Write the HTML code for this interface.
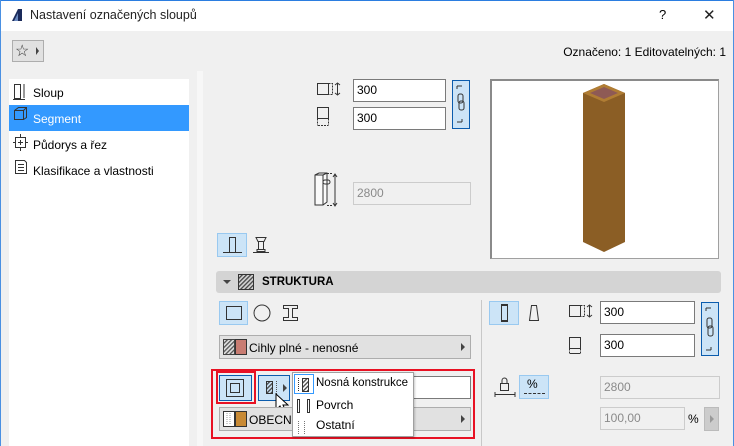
<!DOCTYPE html>
<html><head><meta charset="utf-8"><style>
*{margin:0;padding:0;box-sizing:border-box}
body{width:734px;height:446px;overflow:hidden;background:#f0f0f0;font-family:"Liberation Sans",sans-serif;font-size:12px;color:#000;position:relative}
.a{position:absolute}
.fld{position:absolute;background:#fff;border:1px solid #7a7a7a;padding:3px 0 0 3px;font-size:12px}
.dis{position:absolute;background:#f0f0f0;border:1px solid #ccc;color:#8a8a8a;padding:3px 0 0 3px;font-size:12px}
.sel{position:absolute;background:#cce4f7;border:1px solid #99c9f0}
.dd{position:absolute;background:#e1e1e1;border:1px solid #adadad}
.tri{position:absolute;width:0;height:0;border-top:4px solid transparent;border-bottom:4px solid transparent;border-left:4px solid #444}
.li{position:absolute;left:9px;width:180px;height:26px;padding:7px 0 0 24px;font-size:12px}
</style></head><body>
<div class="a" style="left:0;top:0;width:734px;height:31px;background:#fff;border:1px solid #2b7de0;border-bottom:none"></div>
<div class="a" style="left:0;top:0;width:1px;height:446px;background:#4a90e2"></div>
<div class="a" style="left:733px;top:0;width:1px;height:446px;background:#4a90e2"></div>
<svg class="a" style="left:10px;top:8px" width="14" height="14"><path d="M2 13 L8 1 L12 1 L12 13 Z" fill="#1a2a5a"/><path d="M4 13 L8 5 L8 13Z" fill="#6a8ac0"/></svg>
<div class="a" style="left:30px;top:8px;font-size:12.5px;color:#222">Nastavení označených sloupů</div>
<div class="a" style="left:659px;top:7px;font-size:13px">?</div>
<div class="a" style="left:703px;top:6px;font-size:15px;font-weight:normal;color:#222">✕</div>

<div class="a" style="left:12px;top:40px;width:32px;height:22px;background:#e1e1e1;border:1px solid #adadad"></div>
<div class="a" style="left:15px;top:41px;font-size:16px;color:#333">☆</div>
<div class="tri" style="left:36px;top:47px;border-left-width:3px"></div>
<div class="a" style="right:8px;top:45px;font-size:12px">Označeno: 1 Editovatelných: 1</div>

<div class="a" style="left:9px;top:79px;width:180px;height:367px;background:#fff"></div>
<div class="a" style="left:197px;top:71px;width:6px;height:375px;background:#f7f7f7"></div>
<div class="li" style="top:79px">Sloup</div>
<div class="li" style="top:105px;background:#3399ff;color:#fff">Segment</div>
<div class="li" style="top:131px">Půdorys a řez</div>
<div class="li" style="top:157px">Klasifikace a vlastnosti</div>
<svg class="a" style="left:12px;top:82px" width="18" height="100" fill="none" stroke="#333" stroke-width="1">
<rect x="2.5" y="2.5" width="6" height="14"/><path d="M1 17.5h12M12 2v14"/>
<path d="M2.5 28.5l4-3h8v10l-3 2H2.5zM2.5 28.5h9v9M11.5 28.5l3-3"/>
<rect x="3.5" y="55.5" width="10" height="10"/><path d="M8.5 58v5M6 60.5h5M8.5 52v3M8.5 66v3M1 60.5h2M14 60.5h2"/>
<path d="M3.5 78.5h9l2 2v11h-11z M6 82.5h6M6 85.5h6M6 88.5h6"/></svg>

<svg class="a" style="left:316px;top:82px" width="30" height="50" fill="none" stroke="#333" stroke-width="1"><rect x="1.5" y="1.5" width="11" height="11"/><path d="M12.5 1.5h4v11h-4" stroke-dasharray="2 1"/><path d="M21.5 1v12M19 3l2.5-2 2.5 2M19 11l2.5 2 2.5-2"/><rect x="1.5" y="25.5" width="11" height="11"/><path d="M1.5 36.5v7M12.5 36.5v7M2 43.5h10" stroke-dasharray="2 1"/></svg>
<div class="fld" style="left:353px;top:79px;width:93px;height:23px">300</div>
<div class="fld" style="left:353px;top:107px;width:93px;height:23px">300</div>
<div class="a" style="left:452px;top:80px;width:18px;height:49px;background:#cce4f7;border:1px solid #0b5cad"></div>
<svg class="a" style="left:454px;top:84px" width="14" height="40" fill="none" stroke="#333"><path d="M3 2h5M3 2v3M3 38h5M8 38v-3"/><rect x="4" y="10" width="5" height="9" rx="2"/><rect x="5" y="17" width="5" height="9" rx="2"/></svg>
<svg class="a" style="left:313px;top:172px" width="34" height="36" fill="none" stroke="#333"><path d="M2 3l4-2h8v29l-4 3H2z" fill="#fafafa"/><path d="M2 3h8v30M10 3l4-2"/><path d="M14 1.5h5M14 33.5h5" stroke-dasharray="2 1"/><path d="M22 2v32M20 5l2-3 2 3M20 31l2 3 2-3"/><rect x="10" y="8" width="7" height="4" rx="2"/></svg>
<div class="dis" style="left:353px;top:182px;width:118px;height:23px">2800</div>

<div class="a" style="left:490px;top:79px;width:229px;height:180px;background:#fff;border:1px solid #a0a0a0;border-top:2px solid #8a8a8a;border-left:2px solid #8a8a8a"></div>
<svg class="a" style="left:583px;top:84px" width="44" height="170"><path d="M0 9 L21 0 L42 9 L42 158 L21 168 L0 158Z" fill="#8b5e25"/><path d="M0 9 L21 0 L42 9 L21 18Z" fill="#b07d34"/><path d="M7 9 L21 3 L35 9 L21 15Z" fill="#8e5a55"/></svg>

<div class="sel" style="left:217px;top:233px;width:30px;height:24px"></div>
<svg class="a" style="left:220px;top:235px" width="60" height="20" fill="none" stroke="#333"><path d="M9.5 18V2.5h6V18M3 17.5h19"/><path d="M36 2.5h10l-2 4h-6zM38.5 6.5v8M43.5 6.5v8M37 14.5h8v2h-8zM33 17.5h16"/></svg>

<div class="a" style="left:216px;top:271px;width:505px;height:22px;background:#d4d4d4;border-radius:3px"></div>
<div class="a" style="left:223px;top:280px;width:0;height:0;border-left:4px solid transparent;border-right:4px solid transparent;border-top:4px solid #444"></div>
<svg class="a" style="left:238px;top:274px" width="16" height="16"><defs><pattern id="h" width="3" height="3" patternUnits="userSpaceOnUse" patternTransform="rotate(45)"><rect width="1.3" height="3" fill="#444"/></pattern></defs><rect x="0.5" y="0.5" width="15" height="15" fill="url(#h)" stroke="#333"/></svg>
<div class="a" style="left:262px;top:276px;font-weight:bold;font-size:11.5px">STRUKTURA</div>

<div class="a" style="left:481px;top:300px;width:1px;height:146px;background:#c8c8c8"></div>
<div class="sel" style="left:219px;top:301px;width:29px;height:24px"></div>
<svg class="a" style="left:222px;top:303px" width="82" height="20" fill="none" stroke="#333"><rect x="4.5" y="3.5" width="15" height="13"/><circle cx="40" cy="10" r="8"/><path d="M61.5 2.5h14v3h-5v9h5v3h-14v-3h5v-9h-5z"/></svg>
<div class="dd" style="left:219px;top:335px;width:252px;height:24px"></div>
<svg class="a" style="left:223px;top:339px" width="26" height="16"><rect x="0.5" y="0.5" width="11" height="15" fill="url(#h)" stroke="#333" opacity=".9"/><rect x="12.5" y="0.5" width="11" height="15" fill="#c87c72" stroke="#333"/></svg>
<div class="a" style="left:249px;top:341px">Cihly plné - nenosné</div>
<div class="tri" style="left:461px;top:343px"></div>

<div class="a" style="left:211px;top:369px;width:264px;height:70px;border:2px solid #e81123"></div>
<div class="a" style="left:216px;top:371px;width:40px;height:33px;border:2px solid #e81123"></div>
<div class="a" style="left:219px;top:375px;width:33px;height:26px;background:#cce4f7;border:1px solid #0b5cad"></div>
<svg class="a" style="left:226px;top:379px" width="18" height="18" fill="none" stroke="#333"><rect x="0.5" y="0.5" width="17" height="17"/><rect x="4.5" y="4.5" width="9" height="9" fill="#cce4f7"/></svg>
<div class="a" style="left:258px;top:375px;width:32px;height:26px;background:#cce4f7;border:1px solid #0b5cad"></div>
<svg class="a" style="left:262px;top:380px" width="26" height="16"><rect x="4.5" y="1.5" width="6" height="12" fill="url(#h)" stroke="#333"/><path d="M14.5 1v13" stroke="#555" stroke-dasharray="1 1"/></svg>
<div class="tri" style="left:283px;top:384px"></div>
<svg class="a" style="left:275px;top:393px" width="16" height="22"><path d="M1 1v16l4-4 3 7 3-1-3-7h5z" fill="#fff" stroke="#000"/></svg>
<div class="a" style="left:412px;top:376px;width:59px;height:23px;background:#fff;border:1px solid #7a7a7a"></div>
<div class="dd" style="left:219px;top:407px;width:252px;height:24px"></div>
<svg class="a" style="left:223px;top:411px" width="26" height="16"><rect x="0.5" y="0.5" width="11" height="15" fill="#fff" stroke="#333"/><path d="M4 2v12M7 2v12" stroke="#999" stroke-dasharray="1 1"/><rect x="12.5" y="0.5" width="11" height="15" fill="#c88a35" stroke="#333"/></svg>
<div class="a" style="left:249px;top:413px">OBECNÉ</div>
<div class="tri" style="left:461px;top:415px"></div>

<div class="a" style="left:292px;top:372px;width:122px;height:65px;background:#fff;border:1px solid #a0a0a0;box-shadow:1px 1px 2px rgba(0,0,0,.2)"></div>
<div class="a" style="left:294px;top:374px;width:20px;height:20px;border:1px solid #3399ff"></div>
<svg class="a" style="left:296px;top:376px" width="18" height="58" fill="none" stroke="#333"><path d="M2.5 2v14" stroke-dasharray="1 1"/><rect x="6.5" y="2.5" width="6" height="13" fill="url(#h)"/><path d="M1.5 23.5h2v13h-2zM11.5 23.5h2v13h-2z"/><path d="M2.5 45v13M8.5 45v13" stroke="#777" stroke-dasharray="1 1"/></svg>
<div class="a" style="left:316px;top:377px;font-size:11.5px">Nosná konstrukce</div>
<div class="a" style="left:316px;top:398px">Povrch</div>
<div class="a" style="left:316px;top:418px">Ostatní</div>

<div class="sel" style="left:489px;top:301px;width:30px;height:24px"></div>
<svg class="a" style="left:492px;top:303px" width="60" height="20" fill="none" stroke="#333"><path d="M9.5 2.5h6v15h-6zM9 1.5h7M9 18.5h7"/><path d="M39.5 2.5h5l2 15h-9z"/></svg>
<svg class="a" style="left:568px;top:303px" width="30" height="52" fill="none" stroke="#333"><rect x="1.5" y="2.5" width="11" height="11"/><path d="M12.5 2.5h4v11h-4" stroke-dasharray="2 1"/><path d="M21.5 2v12M19 4l2.5-2 2.5 2M19 12l2.5 2 2.5-2"/><rect x="1.5" y="34.5" width="11" height="11"/><path d="M1.5 45.5v6M12.5 45.5v6" stroke-dasharray="2 1"/><path d="M2 50.5h10"/></svg>
<div class="fld" style="left:600px;top:301px;width:95px;height:23px">300</div>
<div class="fld" style="left:600px;top:334px;width:95px;height:23px">300</div>
<div class="a" style="left:701px;top:302px;width:18px;height:54px;background:#cce4f7;border:1px solid #0b5cad"></div>
<svg class="a" style="left:703px;top:306px" width="14" height="46" fill="none" stroke="#333"><path d="M3 2h5M3 2v3M3 44h5M8 44v-3"/><rect x="4" y="12" width="5" height="10" rx="2"/><rect x="5" y="20" width="5" height="10" rx="2"/></svg>
<svg class="a" style="left:494px;top:376px" width="22" height="22" fill="none" stroke="#333"><rect x="6.5" y="7.5" width="8" height="7"/><path d="M8 7.5v-3a2.5 2.5 0 0 1 5 0v3"/><path d="M1 18.5h20M1 16v5M21 16v5"/></svg>
<div class="sel" style="left:519px;top:375px;width:30px;height:24px"></div>
<div class="a" style="left:527px;top:377px;font-size:12px">%</div>
<div class="a" style="left:524px;top:393px;width:21px;height:1px;border-top:1px dashed #333"></div>
<div class="dis" style="left:600px;top:376px;width:120px;height:23px">2800</div>
<div class="dis" style="left:600px;top:407px;width:85px;height:23px">100,00</div>
<div class="a" style="left:688px;top:412px">%</div>
<div class="a" style="left:704px;top:407px;width:15px;height:24px;background:#ccc;border:1px solid #bbb"></div>
<div class="tri" style="left:710px;top:415px;border-left-color:#999"></div>
</body></html>
